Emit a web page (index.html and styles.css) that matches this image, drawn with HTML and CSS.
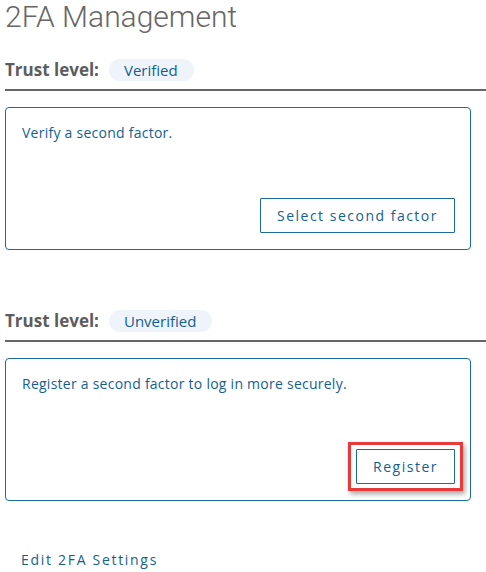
FILE: index.html
```html
<!DOCTYPE html>
<html lang="en">
<head>
    <meta charset="UTF-8">
    <meta name="viewport" content="width=device-width, initial-scale=1.0">
    <title>2FA Management</title>
    <link rel="stylesheet" href="styles.css">
</head>
<body>
    <h1>2FA Management</h1>

    <!-- Verified factor -->
    <div class="section">
        <div class="section-head">
            <span class="trust-label">Trust level:</span>
            <span class="badge">Verified</span>
        </div>
        <div class="card">
            <p>Verify a second factor.</p>
            <button class="btn">Select second factor</button>
        </div>
    </div>

    <!-- Unverified factor -->
    <div class="section second">
        <div class="section-head">
            <span class="trust-label">Trust level:</span>
            <span class="badge">Unverified</span>
        </div>
        <div class="card">
            <p>Register a second factor to log in more securely.</p>
            <div class="highlight">
                <button class="btn">Register</button>
            </div>
        </div>
    </div>

    <a class="edit-link" href="#">Edit 2FA Settings</a>
</body>
</html>
```

FILE: styles.css
```css
body { margin: 0; padding: 0 0 0 5px; font-family: "Open Sans", Arial, sans-serif; background: #fff; color: #135f92; }
h1 { margin: 0; font-family: Roboto, "Open Sans", sans-serif; font-size: 30px; line-height: 34px; font-weight: 300; color: #666; }

.section { margin-top: 25px; }
.section.second { margin-top: 60px; }
.section-head { display: flex; align-items: center; gap: 10px; padding-bottom: 8px; border-bottom: 2px solid #666; }
.trust-label { font-size: 17px; font-weight: 700; color: #5c5c5c; line-height: 22px; }
.badge { height: 22px; line-height: 22px; padding: 0 16px 0 15px; border-radius: 11px; background: #eef4f9; font-size: 15px; color: #135f92; }

.card { box-sizing: border-box; height: 143px; width: 466px; margin-top: 16px; padding: 15px 15px 16px 16px; border: 1px solid #1d6a9c; border-radius: 4px; display: flex; flex-direction: column; justify-content: space-between; }
.card p { margin: 0; font-size: 14px; line-height: 20px; letter-spacing: 0.25px; }

.btn { align-self: flex-end; height: 35px; padding: 0 16px; background: #fff; border: 1px solid #1d6a9c; border-radius: 1px; color: #135f92; font-family: inherit; font-size: 14px; letter-spacing: 1.5px; cursor: pointer; }
.highlight { align-self: flex-end; display: flex; margin: -7px -8px; padding: 4px 5px; border: 3px solid #e8393b; box-shadow: 2px 3px 5px rgba(0, 0, 0, 0.35); }

.edit-link { display: inline-block; margin: 49px 0 0 16px; font-size: 14px; line-height: 20px; letter-spacing: 1.7px; color: #135f92; text-decoration: none; }
```
